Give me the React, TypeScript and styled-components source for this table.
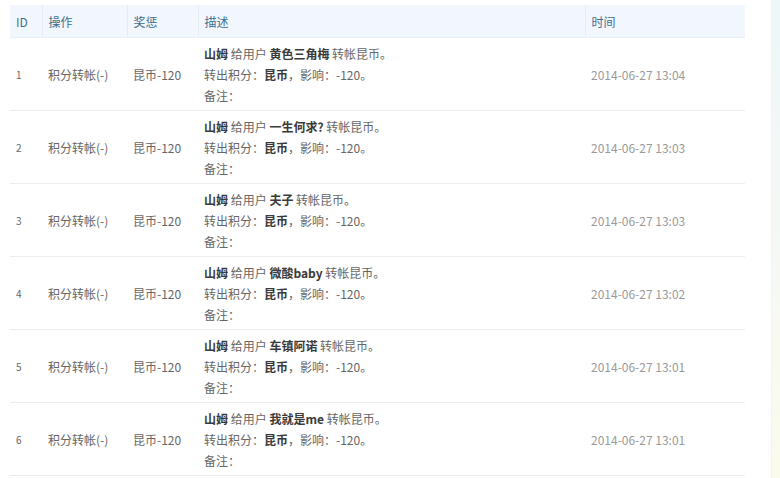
import React from "react";
import styled, { createGlobalStyle } from "styled-components";

const Global = createGlobalStyle`
  html, body { margin: 0; padding: 0; background: #fff; }
  body { font-family: "Noto Sans CJK SC", "Noto Sans", sans-serif; font-size: 12px; color: #666; }
`;

const Page = styled.div`
  display: flex;
  width: 780px;
  height: 478px;
  overflow: hidden;
  background: #fff;
`;

const Main = styled.div`
  flex: 0 0 735px;
  padding: 5px 0 0 10px;
`;

const Gutter = styled.div`
  flex: 1;
`;

const SideStrip = styled.div`
  flex: 0 0 8px;
  border-left: 1px solid #eef3f4;
  background: linear-gradient(#eef6fa, #f6f9f3 60%, #fbfbed);
`;

const Table = styled.table`
  width: 735px;
  border-collapse: collapse;
  table-layout: fixed;
`;

const HeadCell = styled.th<{ $last?: boolean }>`
  height: 32px;
  padding: 0 6px;
  text-align: left;
  font-weight: normal;
  font-size: 12px;
  color: #3d6f92;
  background: #f1f7fc;
  border-right: ${(p) => (p.$last ? "none" : "1px solid #e4edf4")};
  border-bottom: 1px solid #eaf1f6;
`;

const Row = styled.tr`
  border-bottom: 1px solid #e9eff0;
`;

const Cell = styled.td<{ $small?: boolean; $muted?: boolean }>`
  padding: 5px 6px 4px;
  vertical-align: middle;
  font-size: ${(p) => (p.$small ? "10px" : "12px")};
  color: ${(p) => (p.$muted ? "#9a9a9a" : "#666")};
  line-height: 21px;
  white-space: nowrap;
`;

const Line = styled.div`
  line-height: 21px;
  height: 21px;
`;

const Strong = styled.b`
  color: #3a3a3a;
  font-weight: bold;
`;

const rows = [
  { id: 1, user: "黄色三角梅", time: "2014-06-27 13:04" },
  { id: 2, user: "一生何求?", time: "2014-06-27 13:03" },
  { id: 3, user: "夫子", time: "2014-06-27 13:03" },
  { id: 4, user: "微酸baby", time: "2014-06-27 13:02" },
  { id: 5, user: "车镇阿诺", time: "2014-06-27 13:01" },
  { id: 6, user: "我就是me", time: "2014-06-27 13:01" },
];

export default function App() {
  return (
    <>
      <Global />
      <Page>
        <Main>
          <Table>
            <colgroup>
              <col style={{ width: 32 }} />
              <col style={{ width: 85 }} />
              <col style={{ width: 71 }} />
              <col style={{ width: 387 }} />
              <col style={{ width: 160 }} />
            </colgroup>
            <thead>
              <tr>
                <HeadCell>ID</HeadCell>
                <HeadCell>操作</HeadCell>
                <HeadCell>奖惩</HeadCell>
                <HeadCell>描述</HeadCell>
                <HeadCell $last>时间</HeadCell>
              </tr>
            </thead>
            <tbody>
              {rows.map((r) => (
                <Row key={r.id}>
                  <Cell $small>{r.id}</Cell>
                  <Cell>积分转帐(-)</Cell>
                  <Cell>昆币-120</Cell>
                  <Cell>
                    <Line>
                      <Strong>山姆</Strong> 给用户 <Strong>{r.user}</Strong> 转帐昆币。
                    </Line>
                    <Line>
                      转出积分：<Strong>昆币</Strong>，影响：-120。
                    </Line>
                    <Line>备注：</Line>
                  </Cell>
                  <Cell $muted>{r.time}</Cell>
                </Row>
              ))}
            </tbody>
          </Table>
        </Main>
        <Gutter />
        <SideStrip />
      </Page>
    </>
  );
}
